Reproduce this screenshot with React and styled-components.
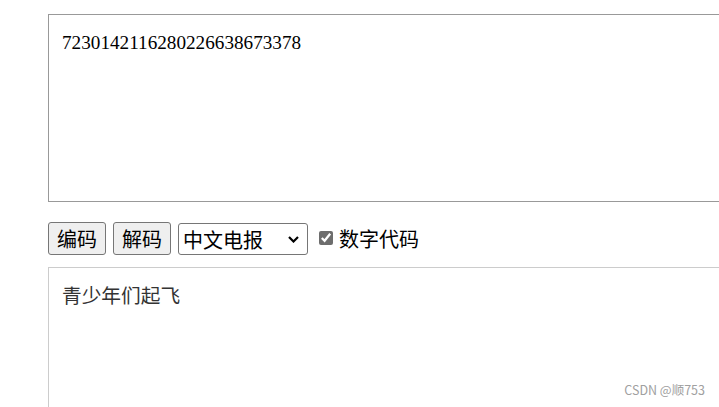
import React, { useState } from 'react'
import styled, { createGlobalStyle } from 'styled-components'

const GlobalStyle = createGlobalStyle`
  html, body {
    margin: 0;
    padding: 0;
    background: #fff;
    overflow: hidden;
  }
`

const Page = styled.div`
  position: relative;
  width: 719px;
  height: 407px;
  overflow: hidden;
  padding: 14px 0 0 48px;
  box-sizing: border-box;
  font-family: "Liberation Serif", "Noto Sans CJK SC", serif;
`

const TextBox = styled.div`
  width: 700px;
  height: ${props => props.height}px;
  box-sizing: border-box;
  border: 1px solid ${props => props.borderColor};
  padding: 17px 13px;
  font-size: ${props => props.fontSize}px;
  line-height: 22px;
  color: ${props => props.color};
`

const Toolbar = styled.div`
  display: flex;
  align-items: center;
  gap: 7px;
  margin: 19px 0 12px;
  height: 34px;
`

const Button = styled.button`
  font-family: "Noto Sans CJK SC", sans-serif;
  font-size: 20px;
  line-height: 29px;
  padding: 1px 8px;
  background: #efefef;
  border: 1px solid #767676;
  border-radius: 3px;
  color: #000;
  cursor: pointer;
`

const SelectWrap = styled.div`
  position: relative;
  margin-top: 2px;
  height: 32px;
`

const Select = styled.select`
  appearance: none;
  font-family: "Noto Sans CJK SC", sans-serif;
  font-size: 20px;
  width: 130px;
  height: 32px;
  padding: 0 4px;
  border: 1px solid #767676;
  border-radius: 3px;
  background: #fff;
  color: #000;
`

const Chevron = styled.svg`
  position: absolute;
  right: 9px;
  top: 13px;
  pointer-events: none;
`

const CheckLabel = styled.label`
  display: flex;
  align-items: center;
  gap: 6px;
  margin-left: 4px;
  font-family: "Noto Sans CJK SC", sans-serif;
  font-size: 20px;
  color: #000;
`

const Check = styled.input`
  width: 14px;
  height: 14px;
  margin: 0;
  accent-color: #6d6d6d;
`

const Watermark = styled.div`
  position: absolute;
  right: 14px;
  bottom: 8px;
  font-family: "Noto Sans CJK SC", sans-serif;
  font-size: 12.5px;
  color: #a0a0a0;
`

export default function App() {
  const [digits, setDigits] = useState(true)

  return (
    <Page>
      <GlobalStyle />
      <TextBox height={188} borderColor="#999" color="#000" fontSize={19.2}>
        7230142116280226638673378
      </TextBox>
      <Toolbar>
        <Button>编码</Button>
        <Button>解码</Button>
        <SelectWrap>
          <Select defaultValue="cn">
            <option value="cn">中文电报</option>
          </Select>
          <Chevron width="11" height="7" viewBox="0 0 11 7">
            <path d="M1 1 L5.5 5.5 L10 1" fill="none" stroke="#000" strokeWidth="2.2" />
          </Chevron>
        </SelectWrap>
        <CheckLabel>
          <Check type="checkbox" checked={digits} onChange={e => setDigits(e.target.checked)} />
          数字代码
        </CheckLabel>
      </Toolbar>
      <TextBox height={160} borderColor="#ccc" color="#333" fontSize={19.7}>
        青少年们起飞
      </TextBox>
      <Watermark>CSDN @顺753</Watermark>
    </Page>
  )
}
